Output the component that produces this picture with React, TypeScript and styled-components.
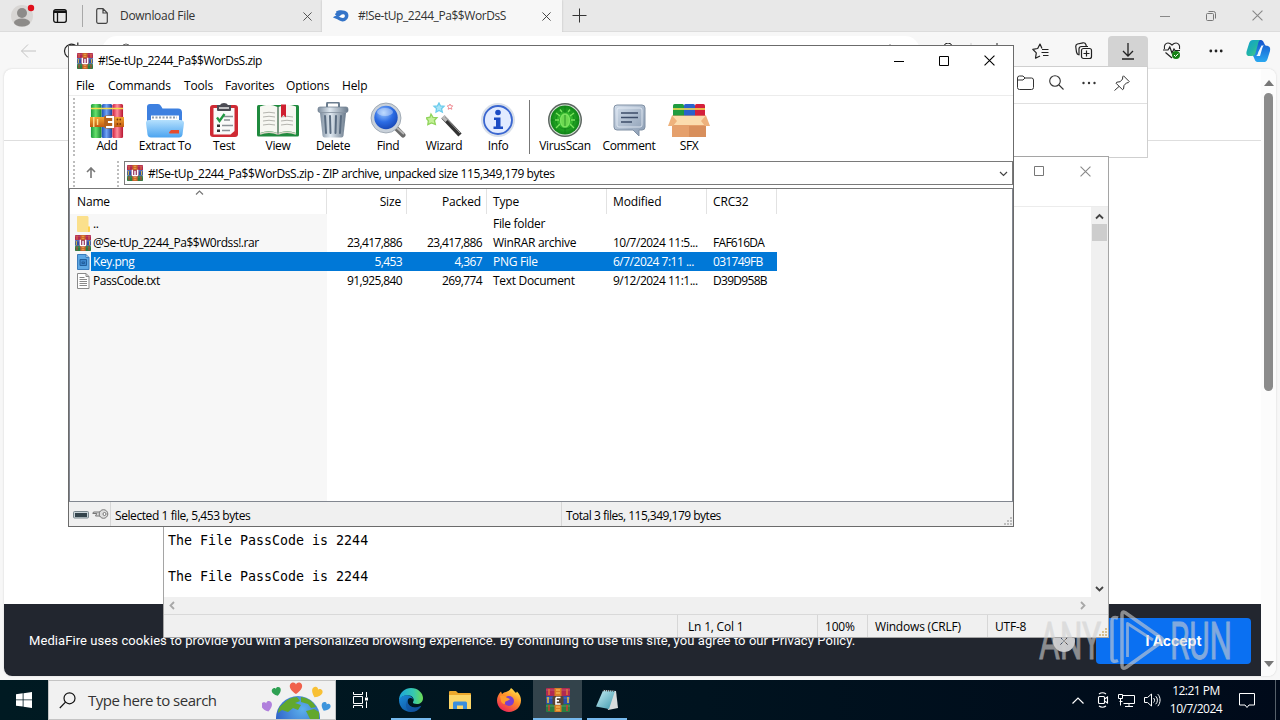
import type { ReactNode } from "react";
import styled, { createGlobalStyle, css } from "styled-components";

const FILES = [
  { icon: "folder", name: "..", size: "", packed: "", type: "File folder", modified: "", crc: "" },
  {
    icon: "rar",
    name: "@Se-tUp_2244_Pa$$W0rdss!.rar",
    size: "23,417,886",
    packed: "23,417,886",
    type: "WinRAR archive",
    modified: "10/7/2024 11:5...",
    crc: "FAF616DA",
  },
  {
    icon: "png",
    name: "Key.png",
    size: "5,453",
    packed: "4,367",
    type: "PNG File",
    modified: "6/7/2024 7:11 ...",
    crc: "031749FB",
    selected: true,
  },
  {
    icon: "txt",
    name: "PassCode.txt",
    size: "91,925,840",
    packed: "269,774",
    type: "Text Document",
    modified: "9/12/2024 11:1...",
    crc: "D39D958B",
  },
];

const MENU = [
  { label: "File", width: 32 },
  { label: "Commands", width: 76 },
  { label: "Tools", width: 41 },
  { label: "Favorites", width: 61 },
  { label: "Options", width: 56 },
  { label: "Help", width: 40 },
];

export default function App() {
  return (
    <Desktop>
      <GlobalStyle />
      <Browser />
      <Notepad />
      <WinRar />
      <Taskbar />
      <Watermark />
    </Desktop>
  );
}

/* ---------- browser ---------- */

const Browser = () => (
  <BrowserFrame>
    <TabStrip>
      <ProfileArea>
        <ProfileIcon />
        <WorkspaceIcon />
      </ProfileArea>
      <Tab $width={239}>
        <PageIcon />
        <TabTitle $gap={12} $spacing={-0.3}>Download File</TabTitle>
        <CloseGlyph size={9} color="#444" />
      </Tab>
      <Tab $width={240} $active>
        <FlameIcon />
        <TabTitle $gap={9} $spacing={-0.43}>#!Se-tUp_2244_Pa$$WorDsS</TabTitle>
        <CloseGlyph size={9} color="#333" />
      </Tab>
      <NewTab>
        <svg width="15" height="15" viewBox="0 0 15 15" stroke="#333" fill="none">
          <path d="M7.500 .5v14M.5 7.500h14" />
        </svg>
      </NewTab>
      <BrowserControls>
        <svg width="10" height="10" stroke="#888" fill="none"><path d="M0 5.5h10" /></svg>
        <svg width="10" height="10" stroke="#777" fill="none">
          <rect x=".5" y="2.500" width="7" height="7" rx="1" />
          <path d="M2.500 .5h5a2 2 0 0 1 2 2v5" />
        </svg>
        <CloseGlyph size={11} color="#888" />
      </BrowserControls>
    </TabStrip>
    <AddressRow>
      <NavButtons>
        <svg width="17" height="14" viewBox="0 0 17 14" stroke="#c2c2c2" fill="none">
          <path d="M16 7H1.500M8 .5 1.500 7 8 13.500" />
        </svg>
        <svg width="18" height="18" viewBox="0 0 18 18" stroke="#222" strokeWidth="1.200" fill="none">
          <path d="M15.500 9A7 7 0 1 1 13 3.800M14.800 .5v4.200H11" />
        </svg>
      </NavButtons>
      <Omnibox>
        <svg width="16" height="16" viewBox="0 0 16 16" stroke="#666" fill="none">
          <circle cx="6" cy="5" r="4" />
          <path d="m9 8 5 6" />
        </svg>
        <svg width="16" height="16" viewBox="0 0 16 16" stroke="#777" fill="none">
          <path d="m8 1.500 2 4 4.500.6-3.300 3 1 4.500L8 11.500z" />
        </svg>
      </Omnibox>
      <EdgeActions>
        <HiddenEdgeIcons>
          <svg width="12" height="16" viewBox="0 0 12 16" stroke="#222" fill="none">
            <path d="M2 5V4a4 4 0 0 1 8 0v1z" />
          </svg>
          <svg width="2" height="16" stroke="#ccc"><path d="M1 0v16" /></svg>
          <svg width="18" height="16" viewBox="0 0 18 16" stroke="#222" fill="none">
            <path d="M9 0v14M2 2.500h14v11H2z" />
          </svg>
        </HiddenEdgeIcons>
        <ActionCell>
          <svg width="17" height="17" viewBox="0 0 17 17" stroke="#222" strokeWidth="1.200" fill="none" strokeLinejoin="round">
            <path d="M10 5.500 8 1 5.700 5.500.8 6.300l3.500 3.500-.8 5.400L8 13M10 6.500h6.500M9.500 9.500h7M11 12.500h5.500" />
          </svg>
        </ActionCell>
        <ActionCell>
          <svg width="18" height="18" viewBox="0 0 18 18" stroke="#222" strokeWidth="1.200" fill="none">
            <rect x="6.500" y="6.500" width="10" height="10" rx="2" />
            <path d="M11.500 8.500v6M8.500 11.500h6M4.500 13 3 12.500C2 12 1.800 11 1.500 10L.8 5C.6 3.500 1 2.500 2.500 2L8 .8c1.500-.2 2.500.4 3 2l.3 1.500M4 13V7c0-1.500 1-2.500 2.500-2.500H13" />
          </svg>
        </ActionCell>
        <ActionCell $pressed>
          <svg width="14" height="17" viewBox="0 0 14 17" stroke="#222" strokeWidth="1.300" fill="none">
            <path d="M7 0v12.500M2 8l5 5 5-5M1 16h12" />
          </svg>
        </ActionCell>
        <ActionCell>
          <svg width="18" height="18" viewBox="0 0 18 18" fill="none" stroke="#222" strokeWidth="1.200">
            <path d="M1.500 7C.5 3 3 1 5 1c2 0 3 1 4 2 1-1 2-2 4-2s4.500 2 3.500 6M0 8h5l1.800-3L9 11l2-4 1 1.500h5M2.500 10.500 9 16" />
            <circle cx="13" cy="13" r="4" fill="#168016" stroke="none" />
            <path d="m11 13 1.500 1.500L15.200 11.700" stroke="#fff" strokeWidth="1" />
          </svg>
        </ActionCell>
        <ActionCell>
          <svg width="14" height="4" fill="#222">
            <circle cx="1.800" cy="2" r="1.400" /><circle cx="7" cy="2" r="1.400" /><circle cx="12.200" cy="2" r="1.400" />
          </svg>
        </ActionCell>
        <ActionCell><CopilotIcon /></ActionCell>
      </EdgeActions>
    </AddressRow>
    <PageRow>
      <WebPage>
        <SiteHeader />
        <CookieBar>
          <CookieText>
            MediaFire uses cookies to provide you with a personalized browsing experience. By
            continuing to use this site, you agree to our Privacy Policy.
          </CookieText>
          <RoundClose>
            <CloseGlyph size={8} color="#20242c" />
          </RoundClose>
          <AcceptButton>I Accept</AcceptButton>
        </CookieBar>
      </WebPage>
      <PageScroll>
        <svg width="10" height="6" fill="#777"><path d="M0 6 5 0l5 6z" /></svg>
        <PageThumb />
        <svg width="10" height="6" fill="#777"><path d="M0 0h10L5 6z" /></svg>
      </PageScroll>
    </PageRow>
    <DownloadsFlyout>
      <FlyoutHeader>
        <svg width="17" height="15" viewBox="0 0 17 15" stroke="#333" fill="none">
          <path d="M.5 3A2 2 0 0 1 2.500 1H6l2 2h6.500a2 2 0 0 1 2 2v7.500a2 2 0 0 1-2 2h-12a2 2 0 0 1-2-2zM.5 5H6l2-2" />
        </svg>
        <svg width="15" height="15" viewBox="0 0 15 15" stroke="#333" strokeWidth="1.100" fill="none">
          <circle cx="6" cy="6" r="5.300" /><path d="m10 10 4.500 4.500" />
        </svg>
        <svg width="14" height="4" fill="#333">
          <circle cx="1.500" cy="2" r="1.200" /><circle cx="7" cy="2" r="1.200" /><circle cx="12.500" cy="2" r="1.200" />
        </svg>
        <svg width="16" height="16" viewBox="0 0 16 16" stroke="#333" fill="none" strokeLinejoin="round">
          <path d="m9.500.8 5.700 5.700-1 1.200-1.700.2-2.500 2.600-.5 3.500-1 .7L2 8.200l.8-1 3.400-.5L8.600 4l.1-2.200zM5 11.500.5 15.500" />
        </svg>
      </FlyoutHeader>
    </DownloadsFlyout>
  </BrowserFrame>
);

/* ---------- notepad ---------- */

const Notepad = () => (
  <NotepadWindow>
    <NotepadTitle>
      <svg width="10" height="10" fill="none" stroke="#777"><path d="M.5 .5h9v9h-9z" /></svg>
      <CloseGlyph size={11} color="#888" />
    </NotepadTitle>
    <NotepadBody>
      <NotepadText>
        {"The File PassCode is 2244\n\nThe File PassCode is 2244"}
      </NotepadText>
      <VScroll>
        <Chevron dir="up" color="#444" bold />
        <VThumb />
        <Chevron dir="down" color="#444" bold />
      </VScroll>
    </NotepadBody>
    <HScroll>
      <Chevron dir="left" color="#a8a8a8" bold />
      <Chevron dir="right" color="#a8a8a8" bold />
    </HScroll>
    <NotepadStatus>
      <StatusCell $width={140}>Ln 1, Col 1</StatusCell>
      <StatusCell $width={50} $pad={7}>100%</StatusCell>
      <StatusCell $width={120} $pad={7}>Windows (CRLF)</StatusCell>
      <StatusCell $width={121} $pad={7}>UTF-8</StatusCell>
      <GripDots color="#d6bf90" />
    </NotepadStatus>
  </NotepadWindow>
);

const GripDots = ({ color }: { color: string }) => (
  <ResizeGrip>
    <svg width="9" height="9" fill={color}>
      <path d="M6 0h2v2H6zM3 3h2v2H3zM6 3h2v2H6zM0 6h2v2H0zM3 6h2v2H3zM6 6h2v2H6z" />
    </svg>
  </ResizeGrip>
);

/* ---------- winrar ---------- */

const WinRar = () => (
  <RarWindow>
    <RarTitle>
      <RarIcon size={16} />
      <TitleText>#!Se-tUp_2244_Pa$$WorDsS.zip</TitleText>
      <RarControls>
        <svg width="10" height="10" stroke="#000" fill="none"><path d="M0 5.500h10" /></svg>
        <svg width="10" height="10" stroke="#000" fill="none"><path d="M.5 .5h9v9h-9z" /></svg>
        <CloseGlyph size={11} color="#000" />
      </RarControls>
    </RarTitle>
    <MenuBar>
      {MENU.map((item) => (
        <MenuItem key={item.label} $width={item.width}>{item.label}</MenuItem>
      ))}
    </MenuBar>
    <ToolBar>
      <Grip $height={58} />
      <Tool width={52} label="Add"><BooksIcon /></Tool>
      <Tool width={64} label="Extract To"><ExtractIcon /></Tool>
      <Tool width={54} label="Test"><TestIcon /></Tool>
      <Tool width={54} label="View"><ViewIcon /></Tool>
      <Tool width={56} label="Delete"><TrashIcon /></Tool>
      <Tool width={54} label="Find"><FindIcon /></Tool>
      <Tool width={58} label="Wizard"><WizardIcon /></Tool>
      <Tool width={50} label="Info"><InfoIcon /></Tool>
      <ToolSeparator />
      <Tool width={60} label="VirusScan"><VirusIcon /></Tool>
      <Tool width={68} label="Comment"><CommentIcon /></Tool>
      <Tool width={52} label="SFX"><SfxIcon /></Tool>
    </ToolBar>
    <PathRow>
      <Grip $height={26} />
      <UpButton>
        <svg width="10" height="11" viewBox="0 0 10 11" stroke="#777" strokeWidth="1.600" fill="none">
          <path d="M5 11V1M1 5l4-4 4 4" />
        </svg>
      </UpButton>
      <Grip $height={26} />
      <PathBox>
        <RarIcon size={16} />
        <PathText>#!Se-tUp_2244_Pa$$WorDsS.zip - ZIP archive, unpacked size 115,349,179 bytes</PathText>
        <Chevron dir="down" color="#444" />
      </PathBox>
    </PathRow>
    <FileList>
      <HeaderRow>
        <HeadCell $name>
          Name
          <SortMark><Chevron dir="up" color="#777" /></SortMark>
        </HeadCell>
        <HeadCell $right>Size</HeadCell>
        <HeadCell $right>Packed</HeadCell>
        <HeadCell>Type</HeadCell>
        <HeadCell>Modified</HeadCell>
        <HeadCell>CRC32</HeadCell>
      </HeaderRow>
      {FILES.map((file) => (
        <FileRow key={file.name} $selected={file.selected}>
          <NameCell>
            <FileIcon kind={file.icon} />
            <FileName>{file.name}</FileName>
          </NameCell>
          <Cell $right $spacing={-0.6}>{file.size}</Cell>
          <Cell $right $spacing={-0.6}>{file.packed}</Cell>
          <Cell $spacing={-0.3}>{file.type}</Cell>
          <Cell $spacing={-0.5}>{file.modified}</Cell>
          <Cell $spacing={-0.7}>{file.crc}</Cell>
        </FileRow>
      ))}
      <NameColumnFill />
    </FileList>
    <RarStatus>
      <StatusIcons>
        <svg width="16" height="8" viewBox="0 0 16 8">
          <rect x=".5" y=".5" width="15" height="6.500" rx="1" fill="#c9d3d8" stroke="#78868c" />
          <rect x="2" y="2" width="12" height="4" fill="#34444c" />
        </svg>
        <svg width="17" height="11" viewBox="0 0 17 11" fill="none" stroke="#777">
          <path d="M8 3H1.500L.8 4.500h4L3.500 7H8" fill="#ddd" />
          <circle cx="11.500" cy="5" r="4.300" fill="#ddd" />
          <circle cx="12.500" cy="5" r="1.500" fill="#fff" />
        </svg>
      </StatusIcons>
      <RarStatusText $width={451}>Selected 1 file, 5,453 bytes</RarStatusText>
      <RarStatusText>Total 3 files, 115,349,179 bytes</RarStatusText>
      <GripDots color="#bdbdbd" />
    </RarStatus>
  </RarWindow>
);

const Tool = ({ width, label, children }: { width: number; label: string; children: ReactNode }) => (
  <ToolButton $width={width}>
    {children}
    <ToolLabel>{label}</ToolLabel>
  </ToolButton>
);

/* ---------- taskbar ---------- */

const Taskbar = () => (
  <TaskbarRow>
    <StartButton>
      <svg width="16" height="16" viewBox="0 0 16 16" fill="#fff">
        <path d="M0 2.200 6.700 1.300v6.200H0zM7.500 1.200 16 0v7.500H7.500zM0 8.300h6.700v6.300L0 13.700zM7.500 8.300H16V16l-8.500-1.200z" />
      </svg>
    </StartButton>
    <SearchBox>
      <svg width="17" height="17" viewBox="0 0 17 17" stroke="#111" strokeWidth="1.200" fill="none">
        <circle cx="10.500" cy="6.300" r="5.500" /><path d="M6.500 10.200.8 16" />
      </svg>
      <SearchText>Type here to search</SearchText>
      <EarthIcon />
    </SearchBox>
    <TaskButton>
      <svg width="17" height="16" viewBox="0 0 17 16" stroke="#fff" fill="none">
        <path d="M.5 0v2.500h9V0M.5 16v-2.500h9V16M.5 4.500h9v7h-9zM13.500 0v5M13.500 9.500V16" />
        <path d="M12 5.500h3v3h-3z" fill="#fff" stroke="none" />
      </svg>
    </TaskButton>
    <TaskButton $running><EdgeIcon /></TaskButton>
    <TaskButton><ExplorerIcon /></TaskButton>
    <TaskButton><FirefoxIcon /></TaskButton>
    <TaskButton $running $active><RarIcon size={24} belt /></TaskButton>
    <TaskButton $running><NotepadIcon /></TaskButton>
    <Tray>
      <svg width="12" height="7" viewBox="0 0 12 7" stroke="#fff" strokeWidth="1.200" fill="none"><path d="M.5 6.500 6 1l5.500 5.500" /></svg>
      <svg width="12" height="16" viewBox="0 0 12 16" stroke="#fff" strokeWidth="1.100" fill="none">
        <rect x="1.500" y="4.500" width="6" height="7" rx="1" />
        <path d="M7.500 7 10.500 5v6L7.500 9M2 2C4 .6 7 .6 9 2M2 14c2 1.400 5 1.400 7 0" />
      </svg>
      <svg width="17" height="14" viewBox="0 0 17 14" stroke="#fff" fill="none">
        <path d="M5 2.500h11.500v8H5.500M.5 1.500h4v4h-4zM2.500 5.500v7M1.500 8.500h3M11 10.500v3M7 13.500h8" />
      </svg>
      <svg width="17" height="14" viewBox="0 0 17 14" stroke="#fff" fill="none">
        <path d="M.5 4.500h3L7.500 1v12l-4-3.500h-3zM9.500 5a3 3 0 0 1 0 4.500M11.700 3.200a5.500 5.500 0 0 1 0 8M13.800 1.200c3 3 3 8.500 0 12" />
      </svg>
      <Clock>
        <span>12:21 PM</span>
        <span>10/7/2024</span>
      </Clock>
      <svg width="16" height="17" viewBox="0 0 16 17" stroke="#fff" fill="none">
        <path d="M.5 1.500h15v11.500H10L8 15.500 6 13H.5z" />
      </svg>
      <PeekLine />
    </Tray>
  </TaskbarRow>
);

/* the translucent mark stays above every window */
const Watermark = () => (
  <Mark>
    <svg width="200" height="66" viewBox="0 0 200 66" opacity=".6">
      <g fill="#d0d0d0" stroke="#d0d0d0" strokeWidth=".8" fontFamily="Roboto, 'Liberation Sans', sans-serif" fontSize="51">
        <text x="1" y="52" textLength="62" lengthAdjust="spacingAndGlyphs">ANY</text>
        <text x="132" y="52" textLength="62" lengthAdjust="spacingAndGlyphs">RUN</text>
      </g>
      <g fill="none" stroke="#d0d0d0" strokeWidth="3.500" strokeLinejoin="round">
        <path d="M84 57V7.500Q84 4 87 5.500L123.500 31q2.500 2 0 4L88 60.500Q84 63 84 58z" />
        <path d="M89.500 50V16.500L115 33" strokeWidth="2.800" />
        <path d="M80 11Q74 9 74 14v37q0 5 6 2.500" />
      </g>
    </svg>
  </Mark>
);

/* ---------- glyphs ---------- */

const CloseGlyph = ({ size, color }: { size: number; color: string }) => (
  <svg width={size} height={size} viewBox="0 0 10 10" stroke={color} fill="none">
    <path d="m.5.5 9 9m0-9-9 9" />
  </svg>
);

const CHEVRONS = {
  up: "M1 6.500 4.500 3 8 6.500",
  down: "M1 3 4.500 6.500 8 3",
  left: "M6 1 2.500 4.500 6 8",
  right: "M3 1 6.500 4.500 3 8",
};

const Chevron = ({ dir, color, bold }: { dir: keyof typeof CHEVRONS; color: string; bold?: boolean }) => (
  <svg width="9" height="9" viewBox="0 0 9 9" stroke={color} strokeWidth={bold ? 1.8 : 1.2} fill="none">
    <path d={CHEVRONS[dir]} />
  </svg>
);

const ProfileIcon = () => (
  <svg width="26" height="26" viewBox="0 0 26 26">
    <circle cx="12" cy="14" r="11" fill="#d8d6d4" />
    <circle cx="12" cy="11" r="5" fill="#8d8b89" />
    <ellipse cx="12" cy="20.500" rx="8" ry="4" fill="#8d8b89" />
    <circle cx="21" cy="6" r="3.200" fill="#e0101c" />
  </svg>
);

const WorkspaceIcon = () => (
  <svg width="14" height="14" viewBox="0 0 14 14" fill="none" stroke="#111" strokeWidth="1.300">
    <rect x=".7" y=".7" width="12.600" height="12.600" rx="2" />
    <path d="M1 2.700h12" strokeWidth="2.600" />
    <path d="M4.500 3v10" />
  </svg>
);

const PageIcon = () => (
  <svg width="12" height="16" viewBox="0 0 12 16" fill="none" stroke="#444" strokeWidth="1.200">
    <path d="M.7 2A1.500 1.500 0 0 1 2 .7h5L11.300 5v9a1.500 1.500 0 0 1-1.300 1.300H2A1.500 1.500 0 0 1 .7 14zM7 .7V5h4.300" />
  </svg>
);

const FlameIcon = () => (
  <svg width="16" height="12" viewBox="0 0 16 12">
    <path d="M3 1.500C6-.5 12-.3 14.500 2.500 17 6.500 14 11.700 9.500 11.500 7 11.300 5 9.500 2.500 8.500L0 7.500c1-1.300 2-1.500 3.500-1.700C2.500 5 1.500 4.200 2.500 3.500 3.500 3 3.500 2.500 3 1.500z" fill="#3474c8" />
    <path d="M5.500 6.500C7.500 6.500 8 4 10.500 4.300c2.300.6 1.500 3.700-.5 3.700C8 8 7.500 7 5.500 6.500z" fill="#fff" />
  </svg>
);

const CopilotIcon = () => (
  <svg width="25" height="24" viewBox="0 0 25 24">
    <defs>
      <linearGradient id="cpA" x1="0" y1="0" x2="1" y2="1">
        <stop offset="0" stopColor="#129ed0" /><stop offset=".5" stopColor="#20b4a8" /><stop offset="1" stopColor="#5cd07c" />
      </linearGradient>
      <linearGradient id="cpB" x1="0" y1="0" x2="0" y2="1">
        <stop offset="0" stopColor="#1350cc" /><stop offset="1" stopColor="#2aa8f0" />
      </linearGradient>
    </defs>
    <path d="M7 1h8c2.500 0 3 4 4.500 5.500C22 7 25 7 24 12l-2.500 8c-.8 2.500-2 3-4 3h-6c-3 0-3-4.500-4.500-6" fill="url(#cpB)" />
    <path d="M7 1h8c-2 0-2.500 2-3 4L9.500 14c-.7 2-1.500 3-3.500 3H3c-2.500 0-3-2.500-2.300-5l2.500-8C4 2 5 1 7 1z" fill="url(#cpA)" />
    <path d="M15.500 6.500h2.500c-1.200.5-1.500 2-2 3.500l-2 7H10c1.500-.5 1.700-2 2.300-4z" fill="#f4f8ff" />
  </svg>
);

const RarIcon = ({ size, belt }: { size: number; belt?: boolean }) => (
  <svg width={size} height={size} viewBox="0 0 24 24">
    <rect x="0" y="0" width="24" height="8" rx="1" fill="#b02a52" />
    <rect x="0" y="8" width="24" height="8" rx="1" fill="#2b4fa8" />
    <rect x="0" y="16" width="24" height="8" rx="1" fill="#2b7d42" />
    <path d="M0 2h24M0 10h24M0 18h24" stroke="#fff" strokeOpacity=".2" />
    <path d="M3 1v6M21 1v6" stroke="#e3743c" strokeWidth="1.500" />
    <path d="M2 9v6M22 9v6" stroke="#e9c03c" strokeWidth="1.500" />
    <path d="M3 17v6M21 17v6" stroke="#d23c30" strokeWidth="1.500" />
    <rect x={belt ? 8.500 : 8} y="0" width={belt ? 7 : 8} height="24" fill={belt ? "#d87c24" : "#c8602a"} />
    <path d="M10 2h4M10 5h4M10 19h4M10 22h4" stroke="#f1b04c" strokeWidth="1.300" />
    <rect x="6.500" y="8" width="11" height="9" rx="1.500" fill={belt ? "#5a4432" : "#a14870"} />
    <path d={belt ? "M10 9.500v6.500h4.500M10 9.500h4.500M10 12.800h3" : "M8 7v7.500q0 1.500 1.500 1.500h5q1.500 0 1.500-1.500V7M12 9v6"} fill="none" stroke="#fff" strokeWidth={belt ? 1.6 : 2} />
  </svg>
);

const BooksIcon = () => (
  <svg width="34" height="36" viewBox="0 0 36 36" preserveAspectRatio="none">
    <defs>
      <linearGradient id="bkG"><stop offset="0" stopColor="#1a9a3c" /><stop offset=".45" stopColor="#66e06c" /><stop offset="1" stopColor="#14812f" /></linearGradient>
      <linearGradient id="bkB"><stop offset="0" stopColor="#1c50b8" /><stop offset=".45" stopColor="#6fa4f4" /><stop offset="1" stopColor="#1c3f9c" /></linearGradient>
      <linearGradient id="bkR"><stop offset="0" stopColor="#d01c3c" /><stop offset=".45" stopColor="#ff8c9c" /><stop offset="1" stopColor="#b8142f" /></linearGradient>
      <linearGradient id="bkO" x1="0" y1="0" x2="0" y2="1"><stop offset="0" stopColor="#f5a834" /><stop offset="1" stopColor="#c25a10" /></linearGradient>
    </defs>
    <rect x="1" y="2" width="11.300" height="34" rx="1.500" fill="url(#bkG)" />
    <rect x="12.500" y="2" width="11" height="34" rx="1.500" fill="url(#bkB)" />
    <rect x="23.700" y="2" width="11.300" height="34" rx="1.500" fill="url(#bkR)" />
    <path d="M1 6.500h34" stroke="#f5dc50" strokeWidth="1.600" />
    <rect x="0" y="15" width="36" height="10" fill="url(#bkO)" />
    <path d="M4 15v10M8 17v6" stroke="#ffe08c" strokeWidth="1.500" />
    <rect x="15" y="13.500" width="11" height="13" rx="2" fill="#b5621c" />
    <path d="M17 15h7.500v10H17M19 20h5" fill="none" stroke="#fff" strokeWidth="2" />
    <path d="M29 17.500h.1M32 17.500h.1M29 22h.1M32 22h.1" stroke="#7c3408" strokeWidth="1.800" strokeLinecap="round" />
  </svg>
);

const ExtractIcon = () => (
  <svg width="38" height="36" viewBox="0 0 38 36">
    <defs>
      <linearGradient id="exF" x1="0" y1="0" x2="0" y2="1"><stop offset="0" stopColor="#b5e0fd" /><stop offset="1" stopColor="#4ba4f0" /></linearGradient>
    </defs>
    <path d="M1 5q0-3 3-3h8q2 0 3 2l1.500 2.500H32q4 0 4 4V24H1z" fill="#3d80e0" />
    <path d="M5 13.500h28v9H5z" fill="#fff" />
    <path d="M6 15.500h25" stroke="#8c9cb0" strokeDasharray="2 1.500" strokeWidth="2" />
    <path d="M0 21q0-3 3-3h31q4 0 4 3l-1.500 11.500q-.5 3-3.500 3H5q-3 0-3.500-3z" fill="url(#exF)" />
    <path d="M23 30.500 25 28h8v3.500h-9.500z" fill="#e64c2c" />
  </svg>
);

const TestIcon = () => (
  <svg width="30" height="36" viewBox="0 0 30 36">
    <rect x="1" y="3" width="28" height="32" rx="3" fill="#cf2a34" />
    <path d="M4.500 6h21v23l-4 3.500h-17z" fill="#fafafa" />
    <path d="M8 3h3q1-2 4-2t4 2h3v5q0 1-1 1H9q-1 0-1-1z" fill="#4c4c54" />
    <path d="M10 6h10" stroke="#e8e8e8" strokeWidth="1.500" />
    <path d="M15 14.500h9M15 18h6M13 23.500h11M13 28.500h8" stroke="#8c9298" strokeWidth="1.300" />
    <path d="m8 15.500 2.500 3.500 5-7" fill="none" stroke="#229844" strokeWidth="2.300" />
    <path d="M8 22.500h3v2.500H8zM8 27.500h3v2.500H8z" fill="#333" />
  </svg>
);

const ViewIcon = () => (
  <svg width="42" height="36" viewBox="0 0 42 36">
    <rect x="0" y="3" width="42" height="31.500" rx="1.500" fill="#1f8a3e" />
    <path d="M3 4.500Q12 1 20.500 5v26Q12 27.500 3 31zM39 4.500Q30 1 21.500 5v26Q30 27.500 39 31z" fill="#f7f7f2" />
    <path d="M3 32q9-3.500 18 0 9-3.500 18 0" fill="none" stroke="#d9d6c8" strokeWidth="1.500" />
    <path d="M21 5v28" stroke="#777" />
    <path d="M6 11q6-1.500 12 0M6 15q6-1.500 12 0M6 19q6-1.500 12 0M6 23q6-1.500 12 0M24 15q6-1.500 12 0M24 19q6-1.500 12 0M24 23q6-1.500 12 0" fill="none" stroke="#b4b4ae" />
    <path d="M24 2.500h5v13l-2.500-2.500L24 15.500z" fill="#cf2030" />
  </svg>
);

const TrashIcon = () => (
  <svg width="32" height="36" viewBox="0 0 32 36">
    <defs>
      <linearGradient id="tr"><stop offset="0" stopColor="#7d8d9e" /><stop offset=".4" stopColor="#dfe8f0" /><stop offset="1" stopColor="#6b7b8c" /></linearGradient>
    </defs>
    <path d="M10 5V2q0-1.500 1.500-1.500h9Q22 .5 22 2v3" fill="none" stroke="#6c7e90" strokeWidth="2" />
    <path d="M3 11h26l-2.500 22.500q-.3 2-2 2h-17q-1.700 0-2-2z" fill="url(#tr)" />
    <rect x="1" y="5" width="30" height="5.500" rx="2" fill="url(#tr)" stroke="#6b7b8c" strokeWidth=".7" />
    <path d="m8 14 1 17M13 14l.5 17M19 14l-.5 17M24 14l-1 17" stroke="#5a6c80" strokeWidth="2" strokeLinecap="round" />
  </svg>
);

const FindIcon = () => (
  <svg width="36" height="36" viewBox="0 0 36 36">
    <defs>
      <radialGradient id="fn" cx=".4" cy=".3" r=".8"><stop offset="0" stopColor="#9cc8ff" /><stop offset=".5" stopColor="#2c6ce4" /><stop offset="1" stopColor="#1440ac" /></radialGradient>
    </defs>
    <path d="m26 26 7 7" stroke="#6b6b6b" strokeWidth="5" strokeLinecap="round" />
    <path d="m26 25 8 7" stroke="#b8b8b8" strokeWidth="2" />
    <circle cx="16" cy="16" r="15" fill="#c9d1da" />
    <circle cx="16" cy="16" r="15" fill="none" stroke="#8893a0" strokeWidth=".7" />
    <circle cx="16" cy="15.500" r="11.700" fill="url(#fn)" />
    <ellipse cx="15" cy="10" rx="8" ry="4" fill="#fff" opacity=".35" />
  </svg>
);

const WizardIcon = () => (
  <svg width="36" height="36" viewBox="0 0 36 36">
    <path d="m17 15 17 18" stroke="#333" strokeWidth="4.500" />
    <path d="m17 14.500 4 4" stroke="#bbb" strokeWidth="4.500" />
    <path d="m19 15 15 16" stroke="#999" strokeWidth="1" />
    <g strokeWidth="1.300">
      <path d="m13 1 1.500 3 3.500.3-2.500 2.400.8 3.300-3.300-1.600L10 10l.5-3.400L8 4.300l3.500-.4z" fill="#a8e4f8" stroke="#6cccec" />
      <path d="m5 12 2 3.300 4 .2-2.600 3 1 4L5.500 21l-3.700 1.700.6-4L0 16l4-.8z" fill="#c4f098" stroke="#90d45c" />
      <path d="m24 2 .8 1.700 2 .2-1.400 1.400.4 2-1.800-1-1.800 1 .4-2L21.200 4l2-.3z" fill="#fff" stroke="#f08c94" strokeWidth="1" />
    </g>
  </svg>
);

const InfoIcon = () => (
  <svg width="36" height="36" viewBox="0 0 36 36">
    <circle cx="18" cy="18" r="17" fill="#d9e0ea" />
    <circle cx="18" cy="18" r="14" fill="#e2ebff" stroke="#3a66d0" strokeWidth="1.800" />
    <circle cx="18" cy="10.500" r="2.800" fill="#1c4cc4" />
    <path d="M14 15.500h6.500v9H23v2.500h-9.500v-2.500H16v-6.500h-2z" fill="#1c4cc4" />
  </svg>
);

const VirusIcon = () => (
  <svg width="36" height="36" viewBox="0 0 36 36">
    <defs>
      <radialGradient id="vs"><stop offset="0" stopColor="#64e048" /><stop offset=".6" stopColor="#24a824" /><stop offset="1" stopColor="#108418" /></radialGradient>
    </defs>
    <circle cx="18" cy="18" r="17" fill="#5c6660" />
    <circle cx="18" cy="18" r="15.500" fill="#d8e4d8" />
    <circle cx="18" cy="18" r="14.500" fill="url(#vs)" />
    <path d="M18 4v28M4 18h28M18 9a9 9 0 1 0 .1 0" fill="none" stroke="#0b7414" strokeOpacity=".6" />
    <g stroke="#7ce460" strokeWidth="1.300" fill="none">
      <path d="m13 14-4-3M23 14l4-3M12 18H8M24 18h4M13 22l-4 4M23 22l4 4M15 10l-2-2.500M21 10l2-2.500" />
      <ellipse cx="18" cy="18.500" rx="4.500" ry="6.500" fill="#6cd850" />
    </g>
    <path d="M18 13v11" stroke="#289424" />
  </svg>
);

const CommentIcon = () => (
  <svg width="34" height="36" viewBox="0 0 34 36">
    <defs>
      <linearGradient id="cm" x1="0" y1="0" x2="1" y2="1"><stop offset="0" stopColor="#d4dfec" /><stop offset="1" stopColor="#8799b0" /></linearGradient>
    </defs>
    <path d="M5 3h25q3 0 3 3v19q0 3-3 3h-3v6l-6-6H5q-3 0-3-3V6q0-3 3-3z" fill="url(#cm)" stroke="#8090a4" />
    <rect x="5" y="6" width="25" height="19" rx="2" fill="none" stroke="#e8eff8" strokeOpacity=".8" />
    <path d="M9 11h17M9 15.500h17M9 20h11" stroke="#3c4c68" strokeWidth="1.500" />
  </svg>
);

const SfxIcon = () => (
  <svg width="42" height="36" viewBox="0 0 42 36">
    <rect x="5" y="2" width="11" height="16" rx="1.500" fill="#1f9c40" />
    <rect x="16" y="2" width="11" height="16" rx="1.500" fill="#2b62cc" />
    <rect x="27" y="2" width="10" height="16" rx="1.500" fill="#d4203c" />
    <path d="M5 7h32" stroke="#f5dc50" strokeWidth="1.600" />
    <path d="M4 13.500h34V35H4z" fill="#e5a06c" />
    <path d="M21 24h17v11H21z" fill="#d88f5c" />
    <path d="M4 14h34l-2 9H21L6 23z" fill="#fbdcae" />
    <path d="M4 13.500 0 24h5l4-5zM38 13.500 42 24h-5l-4-5z" fill="#eeb27c" />
  </svg>
);

const FileIcon = ({ kind }: { kind: string }) => {
  if (kind === "rar") return <RarIcon size={16} />;
  if (kind === "folder")
    return (
      <svg width="16" height="16" viewBox="0 0 16 16">
        <path d="M2.500 0h10l1 1v9.500l1.500 1V15q0 1-1 1H3q-1 0-1-1V.5z" fill="#fbe08c" />
        <path d="M13 10.500h2V15q0 1-1 1h-1z" fill="#ffd14c" />
      </svg>
    );
  return (
    <svg width="16" height="16" viewBox="0 0 16 16">
      <path
        d="M2.500 .5H11l3 3v12H2.500zM11 .5v3h3"
        fill={kind === "png" ? "#5ea8e4" : "#fff"}
        stroke={kind === "png" ? "#3a7cbc" : "#8a8a8a"}
      />
      {kind === "png" ? (
        <path d="M5 5.500h6.500v6H5zM7 8h2.500v1.500H7z" fill="#3c86cc" stroke="#225f9c" />
      ) : (
        <path d="M4.500 4.500h5M4.500 6.500H12M4.500 8.500H12M4.500 10.500H12M4.500 12.500H12" stroke="#8a8a8a" />
      )}
    </svg>
  );
};

const EarthIcon = () => (
  <svg width="72" height="38" viewBox="0 0 72 38">
    <defs>
      <radialGradient id="ea" cx=".6" cy=".3" r=".8"><stop offset="0" stopColor="#5cb0ec" /><stop offset="1" stopColor="#2450c0" /></radialGradient>
      <path id="heart" d="M0 3.500C-8-1.500-5.500-6.500-2.500-6.500-1-6.500 0-5.500 0-4.500 0-5.500 1-6.500 2.500-6.500 5.500-6.500 8-1.500 0 3.500z" />
    </defs>
    <circle cx="36" cy="37" r="22" fill="url(#ea)" />
    <path d="M21 23q6-7 14-7l3 4-5 2 6 2-3 5-5-2-5 4-6-2-4 3q0-6 5-9zM39 16q10 1 15 10l-5 1-3-4-7-2zM44 30l8-2 5 3v7h-9z" fill="#62a82c" />
    <use href="#heart" transform="translate(34 9) scale(1.150)" fill="#f0614c" />
    <use href="#heart" transform="translate(15 12) rotate(-15) scale(.85)" fill="#2ea052" />
    <use href="#heart" transform="translate(54 13) rotate(25)" fill="#f8c034" />
    <use href="#heart" transform="translate(5.500 27) rotate(-15)" fill="#b080dc" />
    <use href="#heart" transform="translate(63 27) rotate(25) scale(.85)" fill="#3c94dc" />
  </svg>
);

const EdgeIcon = () => (
  <svg width="24" height="24" viewBox="0 0 24 24">
    <defs>
      <linearGradient id="edA"><stop offset="0" stopColor="#1ca4dc" /><stop offset=".6" stopColor="#36c8b0" /><stop offset="1" stopColor="#6cdc54" /></linearGradient>
      <linearGradient id="edB" x1="0" y1="0" x2="1" y2="1"><stop offset="0" stopColor="#1b8ad8" /><stop offset="1" stopColor="#0c4a94" /></linearGradient>
    </defs>
    <path d="M0 11C1 4 6 0 12 0c7 0 12 5 12 10 0 4-3 6-6 6-3 0-4.500-1-4-2 1.500-1.500 1-6-4-6.500C5 7 1 9 0 13z" fill="url(#edA)" />
    <path d="M0 12c1-3.500 5-5 8.500-4.800 3.500.3 5.500 2 5.500 4.300-1-2-4-2-5 0-1.500 4 2 8 7 8 3 0 5-1 6.300-1.700C20.500 21.500 17 24 12 24 5 24 0 19 0 12z" fill="url(#edB)" />
    <path d="M9 11.500c-1.500 4 2 8 7 8 3 0 5-1 6.300-1.700C20.500 21.500 17 24 13 24 7 23 5 17 9 11.500z" fill="#104e9c" opacity=".6" />
  </svg>
);

const ExplorerIcon = () => (
  <svg width="22" height="18" viewBox="0 0 22 18">
    <path d="M0 1q0-1 1-1h6l2 2h12q1 0 1 1v14H0z" fill="#eca82c" />
    <path d="M0 4h22v14H0z" fill="#fcd668" />
    <path d="M4 18v-6q0-1.500 1.500-1.500h11Q18 10.500 18 12v6h-4v-3.500H8V18z" fill="#3c8edc" />
  </svg>
);

const FirefoxIcon = () => (
  <svg width="24" height="24" viewBox="0 0 24 24">
    <defs>
      <linearGradient id="fx" x1=".8" y1="0" x2=".2" y2="1"><stop offset="0" stopColor="#ffe84c" /><stop offset=".45" stopColor="#ff8c28" /><stop offset="1" stopColor="#ec1c5c" /></linearGradient>
    </defs>
    <path d="M14 0c3 2 3.500 4 5 5l1-1.500c3 3 4 6 4 9C24 19 18.500 24 12 24S0 19 0 12.500C0 9 1.500 6 4 3.500L5 6q2-2 4-2c2-1 4-1.500 5-4z" fill="url(#fx)" />
    <circle cx="12" cy="13" r="5" fill="#7b3ed0" />
    <path d="M3 8c3-1 5 0 6.500 1.500L13 11c-1 2-4 1.500-5 3 1 4-4 1-4-1z" fill="#ff9c2c" />
  </svg>
);

const NotepadIcon = () => (
  <svg width="24" height="22" viewBox="0 0 24 22">
    <defs>
      <linearGradient id="np" x1="0" y1="0" x2="1" y2="1"><stop offset="0" stopColor="#c8eef4" /><stop offset="1" stopColor="#3c98ac" /></linearGradient>
    </defs>
    <path d="M9 1 21 2l2 17-10 2z" fill="#d8dcdc" />
    <path d="M8 1.500 20 2l-6 18L1 17.500z" fill="url(#np)" />
    <path d="M8 1.500 20 2" stroke="#444" strokeWidth="1.500" strokeDasharray="1 1" />
  </svg>
);

/* ---------- styles ---------- */

const GlobalStyle = createGlobalStyle`
  body {
    margin: 0;
    overflow: hidden;
  }
  *, *::before, *::after {
    box-sizing: border-box;
  }
  svg {
    flex: none;
    display: block;
  }
`;

const Desktop = styled.div`
  position: relative;
  width: 1280px;
  height: 720px;
  overflow: hidden;
  display: flex;
  flex-direction: column;
  font-family: "Open Sans", "Noto Sans", sans-serif;
  font-size: 12px;
  line-height: 16px;
  letter-spacing: -0.3px;
  color: #000;
  white-space: nowrap;
`;

const BrowserFrame = styled.div`
  position: relative;
  height: 680px;
  display: flex;
  flex-direction: column;
  background: #f7f7f7;
`;

const TabStrip = styled.div`
  display: flex;
  height: 32px;
  background: #e8e8e8;
  border-bottom: 1px solid #dcdcdc;
`;

const ProfileArea = styled.div`
  display: flex;
  align-items: center;
  gap: 18px;
  width: 83px;
  padding-left: 10px;
  margin: 5px 0 4px;
  border-right: 1px solid #a8a8a8;

  & > svg:first-child {
    margin-top: -3px;
    margin-right: -1px;
  }
`;

const Tab = styled.div<{ $width: number; $active?: boolean }>`
  display: flex;
  align-items: center;
  width: ${(p) => p.$width}px;
  height: 32px;
  padding: 0 ${(p) => (p.$active ? 11 : 10)}px 0 ${(p) => (p.$active ? 11 : 13)}px;
  color: #333;
  ${(p) =>
    p.$active &&
    css`
      background: #f7f7f7;
      box-shadow: 0 0 2px #bbb;
      clip-path: inset(0 -3px 0 -3px);
    `}
`;

const TabTitle = styled.span<{ $gap: number; $spacing: number }>`
  flex: 1;
  margin-left: ${(p) => p.$gap}px;
  letter-spacing: ${(p) => p.$spacing}px;
`;

const NewTab = styled.div`
  width: 34px;
  display: grid;
  place-content: center;
`;

const BrowserControls = styled.div`
  margin-left: auto;
  padding-right: 17px;
  display: flex;
  align-items: center;
  gap: 36px;
`;

const AddressRow = styled.div`
  height: 37px;
  padding-top: 1px;
  display: flex;
  align-items: center;
`;

const NavButtons = styled.div`
  width: 102px;
  padding-left: 20px;
  display: flex;
  align-items: center;
  gap: 26px;
`;

const Omnibox = styled.div`
  width: 818px;
  height: 30px;
  padding: 0 22px 0 18px;
  display: flex;
  justify-content: space-between;
  align-items: center;
  border-radius: 15px;
  background: #fff;
`;

const EdgeActions = styled.div`
  flex: 1;
  display: flex;
  align-items: center;
`;

const HiddenEdgeIcons = styled.div`
  width: 98px;
  display: flex;
  align-items: center;
  gap: 16px;
  padding-left: 22px;
`;

const ActionCell = styled.div<{ $pressed?: boolean }>`
  width: ${(p) => (p.$pressed ? 40 : 44)}px;
  height: 30px;
  margin: 0 ${(p) => (p.$pressed ? 2 : 0)}px;
  display: grid;
  place-content: center;
  border-radius: 4px 4px 0 0;
  background: ${(p) => (p.$pressed ? "#d3d3d3" : "none")};

  &:last-child {
    width: 40px;
  }
`;

const PageRow = styled.div`
  display: flex;
  height: 607px;
  margin: 0 4px;
  border-radius: 8px;
  overflow: hidden;
  background: #fff;
  box-shadow: 0 0 2px #ccc;
`;

const WebPage = styled.div`
  width: 1257px;
  display: flex;
  flex-direction: column;
`;

const SiteHeader = styled.div`
  height: 72px;
  border-bottom: 1px solid #dedede;
`;

const CookieBar = styled.div`
  display: flex;
  align-items: center;
  height: 72px;
  margin-top: auto;
  padding: 2px 10px 0 25px;
  background: #22262f;
  color: #fff;
`;

const CookieText = styled.span`
  flex: 1;
  font-family: Roboto, "Liberation Sans", sans-serif;
  font-size: 13px;
  letter-spacing: 0.075px;
`;

const RoundClose = styled.div`
  width: 22px;
  height: 22px;
  margin-right: 21px;
  display: grid;
  place-content: center;
  border-radius: 50%;
  background: #c9cacd;
`;

const AcceptButton = styled.div`
  width: 155px;
  height: 46px;
  border-radius: 4px;
  background: #0a70f2;
  font: bold 14px/46px Inter, sans-serif;
  letter-spacing: 0;
  text-align: center;
`;

const PageScroll = styled.div`
  width: 15px;
  padding: 11px 0 9px;
  display: flex;
  flex-direction: column;
  align-items: center;
  background: #fcfcfc;
`;

const PageThumb = styled.div`
  width: 9px;
  height: 298px;
  margin: 7px 0 auto;
  border-radius: 5px;
  background: #8b8b8b;
`;

const DownloadsFlyout = styled.div`
  position: absolute;
  top: 66px;
  left: 760px;
  width: 388px;
  height: 92px;
  border: 1px solid #cfcfcf;
  background: #fff;
`;

const FlyoutHeader = styled.div`
  height: 37px;
  padding: 0 17px 5px;
  display: flex;
  justify-content: flex-end;
  align-items: center;
  gap: 18px;
  border-bottom: 1px solid #e0e0e0;

  & > svg:first-child {
    margin-right: -3px;
  }
`;

const NotepadWindow = styled.div`
  position: absolute;
  left: 163px;
  top: 156px;
  width: 946px;
  height: 482px;
  display: flex;
  flex-direction: column;
  background: #fff;
  border: 1px solid #a5a5a5;
`;

const NotepadTitle = styled.div`
  height: 50px;
  padding: 9px 17px 0 0;
  display: flex;
  justify-content: flex-end;
  gap: 36px;
  border-bottom: 1px solid #ececec;
`;

const NotepadBody = styled.div`
  flex: 1;
  display: flex;
`;

const NotepadText = styled.pre`
  flex: 1;
  align-self: flex-end;
  margin: 0 0 11px 4px;
  font: 13.300px/18px "DejaVu Sans Mono", monospace;
  letter-spacing: 0;
`;

const VScroll = styled.div`
  width: 17px;
  padding: 5px 0 4px;
  display: flex;
  flex-direction: column;
  align-items: center;
  background: #f0f0f0;
`;

const VThumb = styled.div`
  width: 15px;
  height: 17px;
  margin: 3px 0 auto;
  background: #cdcdcd;
`;

const HScroll = styled.div`
  height: 17px;
  padding: 0 21px 0 4px;
  display: flex;
  justify-content: space-between;
  align-items: center;
  background: #f0f0f0;
`;

const NotepadStatus = styled.div`
  position: relative;
  height: 23px;
  display: flex;
  justify-content: flex-end;
  border-top: 1px solid #d9d9d9;
  background: #f0f0f0;
`;

const StatusCell = styled.div<{ $width: number; $pad?: number }>`
  width: ${(p) => p.$width}px;
  padding: 4px 0 0 ${(p) => p.$pad ?? 10}px;
  border-left: 1px solid #d7d7d7;
  letter-spacing: -0.2px;
`;

const RarWindow = styled.div`
  position: absolute;
  left: 68px;
  top: 45px;
  width: 946px;
  height: 482px;
  display: flex;
  flex-direction: column;
  background: #fff;
  border: 1px solid #6b6b6b;
`;

const RarTitle = styled.div`
  height: 29px;
  padding: 0 18px 0 8px;
  display: flex;
  align-items: center;
`;

const TitleText = styled.span`
  margin-left: 5px;
  padding-top: 1px;
  letter-spacing: -0.48px;
`;

const RarControls = styled.div`
  margin-left: auto;
  display: flex;
  align-items: center;
  gap: 35px;
`;

const MenuBar = styled.div`
  height: 21px;
  padding-left: 7px;
  display: flex;
  align-items: center;
  border-bottom: 1px solid #ececec;
`;

const MenuItem = styled.span<{ $width: number }>`
  width: ${(p) => p.$width}px;
  padding-top: 1px;
  letter-spacing: -0.15px;
`;

const ToolBar = styled.div`
  height: 63px;
  padding-left: 4px;
  display: flex;
`;

const Grip = styled.div<{ $height: number }>`
  width: 2px;
  height: ${(p) => p.$height}px;
  margin: 2px 6px 0 0;
  background: repeating-linear-gradient(#bdbdbd 0 2px, transparent 2px 4px);
`;

const ToolButton = styled.div<{ $width: number }>`
  width: ${(p) => p.$width}px;
  padding-top: 6px;
  display: flex;
  flex-direction: column;
  align-items: center;
`;

const ToolLabel = styled.span`
  letter-spacing: -0.35px;
`;

const ToolSeparator = styled.div`
  width: 1px;
  height: 54px;
  margin: 4px 5px 0 6px;
  background: #777;
`;

const PathRow = styled.div`
  height: 29px;
  padding-left: 4px;
  display: flex;
`;

const UpButton = styled.div`
  width: 36px;
  height: 27px;
  padding-left: 5px;
  display: flex;
  align-items: center;
`;

const PathBox = styled.div`
  flex: 1;
  height: 24px;
  margin: 2px 0 0 -1px;
  padding: 0 4px 0 2px;
  display: flex;
  align-items: center;
  border: 1px solid #7a7a7a;
`;

const PathText = styled.span`
  flex: 1;
  margin-left: 5px;
  padding-top: 2px;
  letter-spacing: -0.42px;
`;

const FileList = styled.div`
  flex: 1;
  display: flex;
  flex-direction: column;
  border: 1px solid #828790;
  border-top-color: #777;
`;

const columns = css`
  display: grid;
  grid-template-columns: 257px 80px 80px 120px 100px 70px;
  width: 707px;
`;

const HeaderRow = styled.div`
  ${columns}
  height: 25px;
`;

const HeadCell = styled.div<{ $right?: boolean; $name?: boolean }>`
  position: relative;
  padding: ${(p) => (p.$name ? "5px 7px 0" : "5px 5px 0 6px")};
  text-align: ${(p) => (p.$right ? "right" : "left")};
  border-right: 1px solid #e2e2e2;
  letter-spacing: -0.15px;
`;

const SortMark = styled.div`
  position: absolute;
  top: -1px;
  left: 125px;
`;

const FileRow = styled.div<{ $selected?: boolean }>`
  ${columns}
  height: 19px;
  line-height: 18px;
  color: ${(p) => (p.$selected ? "#fff" : "#000")};
  background: ${(p) =>
    p.$selected
      ? "linear-gradient(90deg, #f7f7f7 21px, #0078d7 21px)"
      : "linear-gradient(90deg, #f7f7f7 257px, #fff 257px)"};
`;

const NameCell = styled.div`
  display: flex;
  align-items: center;
  padding-left: 5px;
`;

const FileName = styled.span`
  padding: 1px 0 0 2px;
  letter-spacing: -0.45px;
`;

const Cell = styled.div<{ $right?: boolean; $spacing: number }>`
  padding: 1px 5px 0 6px;
  text-align: ${(p) => (p.$right ? "right" : "left")};
  letter-spacing: ${(p) => p.$spacing}px;
`;

const NameColumnFill = styled.div`
  flex: 1;
  width: 257px;
  background: #f7f7f7;
`;

const RarStatus = styled.div`
  position: relative;
  height: 24px;
  display: flex;
  background: #f0f0f0;
`;

const StatusIcons = styled.div`
  width: 42px;
  padding: 1px 3px 0 4px;
  display: flex;
  align-items: center;
  gap: 3px;
  border-right: 1px solid #d7d7d7;
`;

const RarStatusText = styled.div<{ $width?: number }>`
  width: ${(p) => (p.$width ? `${p.$width}px` : "auto")};
  padding: 6px 0 0 4px;
  border-right: ${(p) => (p.$width ? "1px solid #d7d7d7" : "none")};
  letter-spacing: ${(p) => (p.$width ? -0.42 : -0.5)}px;
`;

const ResizeGrip = styled.div`
  position: absolute;
  right: 0;
  bottom: 0;
`;

const TaskbarRow = styled.div`
  height: 40px;
  display: flex;
  color: #fff;
  background: linear-gradient(90deg, #001a22, #00131f 55%, #000a1a);
`;

const StartButton = styled.div`
  width: 48px;
  display: grid;
  place-content: center;
`;

const SearchBox = styled.div`
  width: 288px;
  margin-right: 1px;
  padding: 0 1px 0 10px;
  display: flex;
  align-items: center;
  border: 1px solid #c4c4c4;
  background: #f1f1f1;
  color: #333;
`;

const SearchText = styled.span`
  flex: 1;
  margin-left: 12px;
  font-size: 15px;
  line-height: 20px;
  letter-spacing: -0.500px;
`;

const TaskButton = styled.div<{ $running?: boolean; $active?: boolean }>`
  width: 49px;
  display: grid;
  place-content: center;
  background-color: ${(p) => (p.$active ? "#33434b" : "transparent")};
  ${(p) =>
    p.$running &&
    css`
      background-image: linear-gradient(#76b9ed, #76b9ed);
      background-repeat: no-repeat;
      background-position: center bottom;
      background-size: ${p.$active ? "100%" : "40px"} 2px;
    `}
`;

const Tray = styled.div`
  margin-left: auto;
  display: flex;
  align-items: center;
  gap: 9px;

  & > svg:first-child {
    margin-right: 4px;
  }
`;

const Clock = styled.div`
  width: 52px;
  display: flex;
  flex-direction: column;
  align-items: center;
  line-height: 18px;
  letter-spacing: -0.5px;
  margin-right: 8px;
`;

const PeekLine = styled.div`
  width: 5px;
  height: 40px;
  margin-left: 11px;
  border-left: 1px solid #56606a;
`;

const Mark = styled.div`
  position: absolute;
  left: 1038px;
  top: 607px;
`;
